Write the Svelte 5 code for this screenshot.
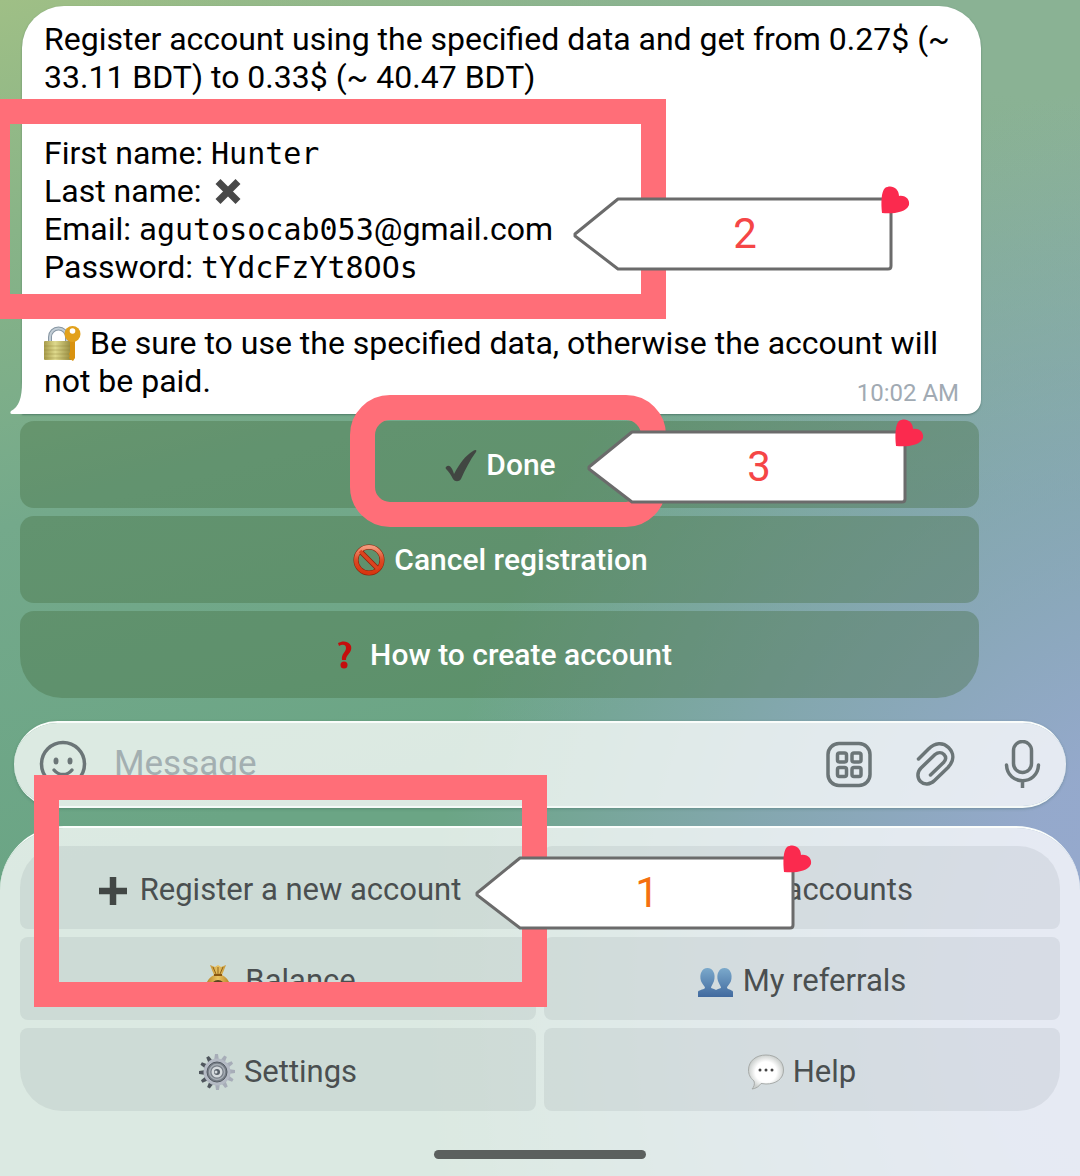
<script lang="ts">
	const inlineButtons = [
		{ icon: 'check', label: 'Done' },
		{ icon: 'forbidden', label: 'Cancel registration' },
		{ icon: 'question', label: 'How to create account' }
	];

	const keys = [
		{ icon: 'plus', label: 'Register a new account' },
		{ icon: 'clipboard', label: 'My accounts' },
		{ icon: 'money', label: 'Balance' },
		{ icon: 'people', label: 'My referrals' },
		{ icon: 'gear', label: 'Settings' },
		{ icon: 'speech', label: 'Help' }
	];

	const steps = [
		{ id: 'register', number: 1 },
		{ id: 'data', number: 2 },
		{ id: 'done', number: 3 }
	];

	const teeth = Array.from({ length: 12 }, (_, i) => i * 30);

	let message = $state('');
</script>

{#snippet emoji(name: string)}
	<svg class="emoji" viewBox="0 0 36 36" aria-hidden="true">
		{#if name === 'lock'}
			<path d="M6 18V11a8.500 8.500 0 0 1 17 0v7" fill="none" stroke="#8796a3" stroke-width="4" />
			<path d="M6 18V11a8.500 8.500 0 0 1 17 0v7" fill="none" stroke="#c3ced6" stroke-width="2" />
			<rect x="0" y="15" width="28" height="19" rx="1" fill="url(#brass)" />
			<path d="M0 20h28M0 24h28M0 28h28M0 32h28" stroke="#8a7c34" stroke-width="1" opacity=".35" />
			<path d="M26 13h5v19l-2 3-3-2-1-1 1-2-1-2 1-2z" fill="#d9920f" />
			<circle cx="28.500" cy="8" r="8" fill="#e2a11c" />
			<circle cx="28.500" cy="5" r="2.800" fill="#fff" />
		{:else if name === 'cross'}
			<path d="M9 7.500l20 20M29 7.500l-20 20" stroke="#484848" stroke-width="7" />
		{:else if name === 'check'}
			<path d="M3 20c3-3 6 0 8 7C17 16 22 9 30 4c3-2 4-1 3 1-6 8-11 18-15 27-2 3-6 3-8 0-2-4-4-7-6-9-1-1-2-2-1-3z" fill="#414642" />
		{:else if name === 'forbidden'}
			<circle cx="18" cy="18" r="13" fill="none" stroke="#8e2009" stroke-width="5" />
			<path d="M9 9l18 18" stroke="#8e2009" stroke-width="5" />
			<circle cx="18" cy="18" r="13" fill="none" stroke="url(#ring)" stroke-width="4" />
			<path d="M9 9l18 18" stroke="#dc4420" stroke-width="3.500" />
		{:else if name === 'question'}
			<path d="M11 6c7-4 15 0 13 7-1 4-5 5-5 10h-4c-1-6 4-8 4-12 0-4-4-4-7-2z" fill="#c50d0d" />
			<circle cx="17" cy="28" r="3.500" fill="#c50d0d" />
		{:else if name === 'plus'}
			<path d="M18 5v28M4 19h28" stroke="#424745" stroke-width="6.500" />
		{:else if name === 'clipboard'}
			<rect x="5" y="4" width="26" height="30" rx="2" fill="#a9743b" />
			<rect x="8" y="8" width="20" height="23" fill="#f4f4f4" />
			<rect x="13" y="2" width="10" height="6" rx="1" fill="#8d9399" />
		{:else if name === 'money'}
			<path d="M10 2l5 2 3-2 3 2 5-2-4 10c6 3 9 9 9 15 0 6-5 8-13 8S5 33 5 27c0-6 3-12 9-15z" fill="url(#gold)" />
			<path d="M13 4l3 7M18 4v7M23 4l-3 7" stroke="#8f6318" stroke-width="1" />
			<path d="M14 12h8" stroke="#8a5710" stroke-width="2" />
			<circle cx="18" cy="24" r="7" fill="#5b4420" />
		{:else if name === 'people'}
			<path d="M0 34v-5c0-2 5-2 7-4 0-2-3-4-4-7C1 11 4 5 9.500 5S18 11 16 18c-1 3-3 5-3 7 2 1 4 1 5 2 1-1 3-1 5-2 0-2-2-4-3-7-2-7 1-13 6.500-13S35 11 33 18c-1 3-4 5-4 7 2 2 6 2 6 4v5z" fill="url(#blue)" />
		{:else if name === 'gear'}
			{#each teeth as angle}
				<path d="M16 0h3l1 7h-5z" fill={angle > 180 ? '#4f565d' : '#a7adb8'} transform="rotate({angle} 18 18)" />
			{/each}
			<circle cx="18" cy="18" r="13.500" fill="#b4bac4" />
			<circle cx="18" cy="18" r="10" fill="#777e87" stroke="#555c64" stroke-width="1" />
			<circle cx="18" cy="18" r="7.500" fill="none" stroke="#a6adb4" stroke-width="1.500" />
			<circle cx="18" cy="18" r="5.500" fill="#d5dadd" />
			<circle cx="18" cy="18" r="3" fill="#59616a" />
			<circle cx="17" cy="18" r="1.500" fill="#d5dadd" />
		{:else if name === 'speech'}
			<path d="M18 1c10 0 17.500 6 17.500 15S28 30 18 30l-5-.5c-2 3-5 5-9 5.500 2-2 3-5 2-8C2 24 .5 20 .5 16 .5 7 8 1 18 1z" fill="url(#cloud)" stroke="#a7aba9" stroke-width="1" />
			<circle cx="12" cy="16" r="1.500" fill="#444" />
			<circle cx="18" cy="16" r="1.500" fill="#444" />
			<circle cx="24" cy="16" r="1.500" fill="#444" />
		{/if}
	</svg>
{/snippet}

<svg class="defs" width="0" height="0" aria-hidden="true">
	<defs>
		<linearGradient id="brass">
			<stop offset="0" stop-color="#a79b4a" />
			<stop offset=".4" stop-color="#ded98c" />
			<stop offset="1" stop-color="#94883c" />
		</linearGradient>
		<linearGradient id="ring" x2="0" y2="1">
			<stop offset="0" stop-color="#f39a7c" />
			<stop offset=".5" stop-color="#dc4a25" />
			<stop offset="1" stop-color="#d8350f" />
		</linearGradient>
		<linearGradient id="gold">
			<stop offset="0" stop-color="#b07a1e" />
			<stop offset=".5" stop-color="#eac463" />
			<stop offset="1" stop-color="#b07a1e" />
		</linearGradient>
		<linearGradient id="blue" x2="0" y2="1">
			<stop offset="0" stop-color="#7ba9cb" />
			<stop offset="1" stop-color="#416a9f" />
		</linearGradient>
		<radialGradient id="cloud">
			<stop offset=".6" stop-color="#fff" />
			<stop offset="1" stop-color="#ccd0ce" />
		</radialGradient>
	</defs>
</svg>

<div class="screen">
	<main class="chat">
		<article class="bubble">
			<svg class="tail" viewBox="0 0 14 32" aria-hidden="true">
				<path d="M12 0c0 16-3 25-11 29-1 1-1 3 1 3h12V0z" fill="#fff" />
			</svg>
			<p>
				Register account using the specified data and get from 0.27$ (~ 33.11 BDT) to 0.33$ (~
				40.47 BDT)
			</p>
			<p>
				First name: <code>Hunter</code><br />
				Last name: {@render emoji('cross')}<br />
				Email: <code>agutosocab053</code>@gmail.com<br />
				Password: <code>tYdcFzYt8OOs</code>
			</p>
			<p>
				{@render emoji('lock')} Be sure to use the specified data, otherwise the account will
			</p>
			<footer>
				<span>not be paid.</span>
				<time>10:02 AM</time>
			</footer>
		</article>

		<div class="inline-buttons">
			{#each inlineButtons as button}
				<button type="button">
					{@render emoji(button.icon)}
					<span>{button.label}</span>
				</button>
			{/each}
		</div>
	</main>

	<form class="composer">
		<button type="button" aria-label="Emoji">
			<svg viewBox="0 0 48 48">
				<circle cx="24" cy="24" r="21.500" />
				<path d="M15 30c5 6 13 6 18 0" />
				<ellipse class="solid" cx="17" cy="21" rx="2.500" ry="3.500" />
				<ellipse class="solid" cx="31" cy="21" rx="2.500" ry="3.500" />
			</svg>
		</button>
		<input type="text" placeholder="Message" aria-label="Message" bind:value={message} />
		<button type="button" aria-label="Bot keyboard">
			<svg viewBox="0 0 48 48">
				<rect x="3" y="3.500" width="42" height="42" rx="11" />
				<rect x="12.500" y="13" width="9" height="9" rx="2" />
				<rect x="27" y="13" width="9" height="9" rx="2" />
				<rect x="12.500" y="27.500" width="9" height="9" rx="2" />
				<rect x="27" y="27.500" width="9" height="9" rx="2" />
			</svg>
		</button>
		<button type="button" aria-label="Attach file">
			<svg viewBox="0 0 48 48">
				<path d="M6.500 19L16.500 9C23 2.500 31 2 36.500 7.500C42.500 13.500 42 21 36 27.500L22.500 40.500C18 45 12 45 8.500 41.500C5 38 5 32 9 28L23 14.500C26 12 29.500 12 32 14.500C34.500 17 34 20 31.500 22.500L18.500 35" />
			</svg>
		</button>
		<button type="button" aria-label="Record voice message">
			<svg viewBox="0 0 48 48">
				<rect x="14.500" y="1.500" width="18" height="31" rx="9" />
				<path d="M7.500 25c1 21 31 21 32 0M23.500 41v7" />
			</svg>
		</button>
	</form>

	<section class="keyboard">
		<div class="keys">
			{#each keys as key}
				<button type="button">
					{@render emoji(key.icon)}
					<span>{key.label}</span>
				</button>
			{/each}
		</div>
		<div class="home-bar"></div>
	</section>

	{#each steps as step}
		<div class="frame {step.id}"></div>
	{/each}
	{#each steps as step}
		<div class="callout {step.id}">
			<svg viewBox="0 0 336 86" aria-hidden="true">
				<path d="M2 48L45 13H318V80q0 3-3 3H45L2 50Z" fill="#fff" stroke="#6b6b6b" stroke-width="3" stroke-linejoin="round" />
				<path d="M309 27C308 17 308 6 312 2C318-2 326 2 326 10C333 9 337 14 336 19C333 27 319 28 309 27Z" fill="#fb2a4e" />
			</svg>
			<span>{step.number}</span>
		</div>
	{/each}
</div>

<style>
	:global(body) {
		margin: 0;
	}

	.defs {
		position: absolute;
	}

	.screen {
		position: relative;
		display: flex;
		flex-direction: column;
		min-height: 100vh;
		overflow: hidden;
		font-family: Roboto, 'Liberation Sans', sans-serif;
		background:
			radial-gradient(
				ellipse 760px 920px at 110% 85%,
				#97a9d0 0%,
				rgba(151, 169, 208, 0.94) 28%,
				rgba(151, 169, 208, 0.56) 60%,
				rgba(151, 169, 208, 0) 100%
			),
			radial-gradient(ellipse 1000px 500px at 100% 0%, #8ab294 20%, rgba(138, 178, 148, 0) 100%),
			linear-gradient(165deg, #9fbf86 0%, #88b487 16%, #74a98b 36%, #6ba585 60%);
	}

	button {
		display: flex;
		align-items: center;
		justify-content: center;
		border: 0;
		padding: 0;
		background: none;
		font-family: inherit;
		cursor: pointer;
	}

	.emoji {
		width: 36px;
		height: 36px;
		vertical-align: -8px;
		overflow: visible;
	}

	.chat {
		padding: 6px 101px 23px 20px;
	}

	.bubble {
		position: relative;
		margin: 0 -2px 7px 2px;
		padding: 14px 22px;
		border-radius: 42px 42px 14px 0;
		background: #fff;
		color: #000;
		font-size: 32px;
		line-height: 38px;
		box-shadow: 0 1px 2px rgba(40, 80, 70, 0.5);
	}

	.bubble p {
		margin: 0 0 38px;
	}

	.bubble p:last-of-type {
		margin: 0;
	}

	.bubble p .emoji {
		margin-right: 2px;
	}

	.bubble code {
		font-family: 'DejaVu Sans Mono', monospace;
		font-size: 30px;
		line-height: 1;
	}

	.bubble footer {
		display: flex;
		justify-content: space-between;
		height: 38px;
	}

	.bubble time {
		padding-top: 16px;
		color: #a1aab3;
		font-size: 24px;
		line-height: 30px;
	}

	.tail {
		position: absolute;
		left: -12px;
		bottom: 0;
		width: 14px;
		height: 32px;
	}

	.inline-buttons {
		display: flex;
		flex-direction: column;
		gap: 8px;
	}

	.inline-buttons button {
		height: 87px;
		gap: 7px;
		border-radius: 14px;
		background: rgba(66, 108, 60, 0.36);
		color: #fff;
		font-size: 30px;
		font-weight: 500;
	}

	.inline-buttons button:last-child {
		border-radius: 14px 14px 42px 42px;
	}

	.composer {
		display: flex;
		align-items: center;
		gap: 39px;
		height: 81px;
		margin: 0 14px 18px;
		padding: 0 19px 2px 25px;
		border-top: 2px solid #fafdfb;
		border-bottom: 2px solid #f4f9f7;
		border-radius: 44px;
		background: rgba(255, 255, 255, 0.76);
		background-clip: padding-box;
		box-shadow: 0 1px 3px rgba(40, 80, 70, 0.3);
	}

	.composer svg {
		width: 48px;
		height: 48px;
		fill: none;
		stroke: #6b7577;
		stroke-width: 3.5;
		stroke-linecap: round;
		stroke-linejoin: round;
	}

	.composer .solid {
		fill: #6b7577;
		stroke: none;
	}

	.composer input {
		flex: 1;
		min-width: 0;
		margin-left: -12px;
		padding: 0;
		border: 0;
		outline: 0;
		background: none;
		color: #222;
		font-family: inherit;
		font-size: 35px;
	}

	.composer input::placeholder {
		color: #a3afb1;
		opacity: 1;
	}

	.keyboard {
		display: flex;
		flex: 1;
		flex-direction: column;
		align-items: center;
		padding: 18px 20px 17px;
		border-top: 2px solid #fafdfb;
		border-radius: 64px 64px 0 0;
		background: rgba(255, 255, 255, 0.76);
		background-clip: padding-box;
	}

	.keys {
		display: grid;
		grid-template-columns: 1fr 1fr;
		gap: 8px;
		width: 100%;
	}

	.keys button {
		box-sizing: border-box;
		height: 83px;
		gap: 9px;
		padding-top: 4px;
		border-radius: 8px;
		background: rgba(85, 95, 105, 0.1);
		color: #4a4f50;
		font-size: 31px;
	}

	.keys button:first-child {
		border-top-left-radius: 42px;
	}

	.keys button:nth-child(2) {
		border-top-right-radius: 42px;
	}

	.keys button:nth-child(5) {
		border-bottom-left-radius: 42px;
	}

	.keys button:last-child {
		border-bottom-right-radius: 42px;
	}

	.home-bar {
		width: 212px;
		height: 9px;
		margin-top: auto;
		border-radius: 5px;
		background: #5b605e;
	}

	/* tutorial marks lie over the chat */
	.frame {
		position: absolute;
		box-sizing: border-box;
		border: 25px solid #ff6e78;
		pointer-events: none;
	}

	.frame.data {
		top: 99px;
		left: -15px;
		width: 681px;
		height: 220px;
	}

	.frame.done {
		top: 395px;
		left: 350px;
		width: 316px;
		height: 132px;
		border-radius: 40px;
	}

	.frame.register {
		top: 775px;
		left: 34px;
		width: 513px;
		height: 232px;
	}

	.callout {
		position: absolute;
		width: 336px;
		height: 86px;
	}

	.callout svg {
		display: block;
		overflow: visible;
	}

	.callout span {
		position: absolute;
		inset: 10px 0 0 8px;
		color: #f54646;
		font-size: 42px;
		line-height: 76px;
		text-align: center;
	}

	.callout.data {
		top: 186px;
		left: 573px;
	}

	.callout.done {
		top: 419px;
		left: 587px;
	}

	.callout.register {
		top: 845px;
		left: 475px;
	}

	.callout.register span {
		color: #f5700f;
	}
</style>
